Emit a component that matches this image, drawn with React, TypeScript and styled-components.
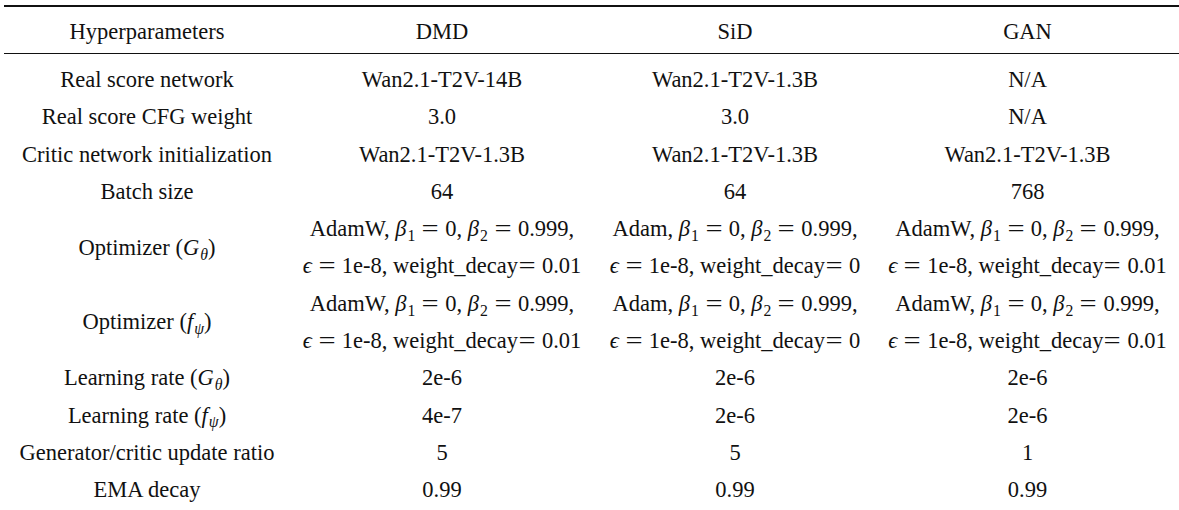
import styled, { createGlobalStyle } from "styled-components";
import type { ReactNode } from "react";

const GlobalStyle = createGlobalStyle`
  html, body {
    margin: 0;
    padding: 0;
    background: #ffffff;
  }
  body {
    font-family: "Liberation Serif", "Times New Roman", serif;
    color: #111;
  }
`;

const COLS = "286px 304px 282px 303px";

const Table = styled.div`
  margin: 5px 0 0 4px;
  width: 1175px;
  font-size: 22.5px;
`;

const HeadRow = styled.div`
  display: grid;
  grid-template-columns: ${COLS};
  border-top: 2px solid #111;
  border-bottom: 1px solid #111;
  height: 46px;
  align-items: center;
`;

const HeadCell = styled.div`
  text-align: center;
  padding-top: 3px;
`;

const Body = styled.div`
  padding-top: 7px;
`;

const Row = styled.div`
  display: grid;
  grid-template-columns: ${COLS};
  align-items: center;
`;

const Cell = styled.div`
  text-align: center;
  line-height: 37.3px;
  white-space: nowrap;
`;

const Line = styled.div`
  line-height: 37.3px;
`;

const V = styled.i`
  font-style: italic;
`;

const Sub = styled.sub<{ $italic?: boolean }>`
  font-size: 0.7em;
  vertical-align: -0.3em;
  line-height: 0;
  margin-left: 1px;
  font-style: ${(p) => (p.$italic ? "italic" : "normal")};
`;

const Op = styled.span<{ $tight?: boolean }>`
  display: inline-block;
  width: 0.8em;
  text-align: center;
  transform: scaleX(1.35);
  margin: ${(p) => (p.$tight ? "0 6px 0 0" : "0 6px")};
`;

const G = () => (
  <>
    (<V>G</V>
    <Sub $italic>θ</Sub>)
  </>
);

const F = () => (
  <>
    (<V>f</V>
    <Sub $italic>ψ</Sub>)
  </>
);

const Opt = ({ name, decay }: { name: string; decay: string }) => (
  <>
    <Line>
      {name}, <V>β</V>
      <Sub>1</Sub>
      <Op>=</Op>0, <V>β</V>
      <Sub>2</Sub>
      <Op>=</Op>0.999,
    </Line>
    <Line>
      <V>ϵ</V>
      <Op>=</Op>1e-8, weight_decay<Op $tight>=</Op>
      {decay}
    </Line>
  </>
);

type RowData = { label: ReactNode; values: ReactNode[] };

const rows: RowData[] = [
  {
    label: "Real score network",
    values: ["Wan2.1-T2V-14B", "Wan2.1-T2V-1.3B", "N/A"],
  },
  { label: "Real score CFG weight", values: ["3.0", "3.0", "N/A"] },
  {
    label: "Critic network initialization",
    values: ["Wan2.1-T2V-1.3B", "Wan2.1-T2V-1.3B", "Wan2.1-T2V-1.3B"],
  },
  { label: "Batch size", values: ["64", "64", "768"] },
  {
    label: (
      <>
        Optimizer <G />
      </>
    ),
    values: [
      <Opt name="AdamW" decay="0.01" />,
      <Opt name="Adam" decay="0" />,
      <Opt name="AdamW" decay="0.01" />,
    ],
  },
  {
    label: (
      <>
        Optimizer <F />
      </>
    ),
    values: [
      <Opt name="AdamW" decay="0.01" />,
      <Opt name="Adam" decay="0" />,
      <Opt name="AdamW" decay="0.01" />,
    ],
  },
  {
    label: (
      <>
        Learning rate <G />
      </>
    ),
    values: ["2e-6", "2e-6", "2e-6"],
  },
  {
    label: (
      <>
        Learning rate <F />
      </>
    ),
    values: ["4e-7", "2e-6", "2e-6"],
  },
  { label: "Generator/critic update ratio", values: ["5", "5", "1"] },
  { label: "EMA decay", values: ["0.99", "0.99", "0.99"] },
];

export default function App() {
  return (
    <>
      <GlobalStyle />
      <Table>
        <HeadRow>
          <HeadCell>Hyperparameters</HeadCell>
          <HeadCell>DMD</HeadCell>
          <HeadCell>SiD</HeadCell>
          <HeadCell>GAN</HeadCell>
        </HeadRow>
        <Body>
          {rows.map((r, i) => (
            <Row key={i}>
              <Cell>{r.label}</Cell>
              {r.values.map((v, j) => (
                <Cell key={j}>{v}</Cell>
              ))}
            </Row>
          ))}
        </Body>
      </Table>
    </>
  );
}
